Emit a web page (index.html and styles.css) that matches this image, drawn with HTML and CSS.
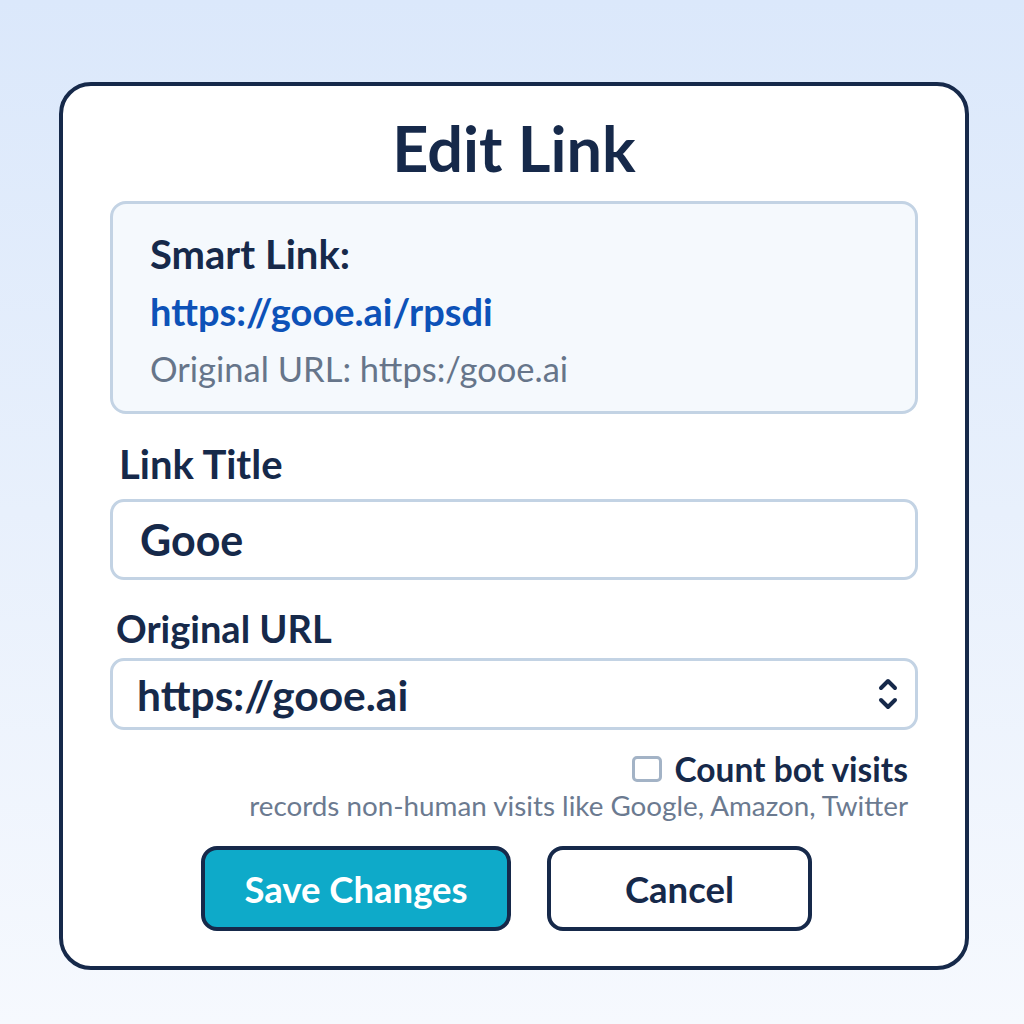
FILE: index.html
```html
<!DOCTYPE html>
<html lang="en">
<head>
<meta charset="utf-8">
<title>Edit Link</title>
<link rel="stylesheet" href="styles.css">
</head>
<body>
<div class="page">
  <div class="card">
    <h1 class="title">Edit Link</h1>
    <div class="smart">
      <div class="smart-label">Smart Link:</div>
      <div class="smart-url">https://gooe.ai/rpsdi</div>
      <div class="smart-orig">Original URL: https:/gooe.ai</div>
    </div>
    <div class="field-label first">Link Title</div>
    <div class="input">Gooe</div>
    <div class="field-label second">Original URL</div>
    <div class="select">
      <span class="select-value">https://gooe.ai</span>
      <svg class="chev" width="22" height="40" viewBox="0 0 22 40" fill="none" stroke="#16294a" stroke-width="4" stroke-linecap="round" stroke-linejoin="round">
        <path d="M4 14 L11 7 L18 14"/>
        <path d="M4 26 L11 33 L18 26"/>
      </svg>
    </div>
    <div class="check-row">
      <span class="checkbox"></span>
      <span class="check-label">Count bot visits</span>
    </div>
    <div class="helper">records non-human visits like Google, Amazon, Twitter</div>
    <div class="buttons">
      <button class="btn save">Save Changes</button>
      <button class="btn cancel">Cancel</button>
    </div>
  </div>
</div>
</body>
</html>
```
FILE: styles.css
```css
html, body {
  margin: 0;
  padding: 0;
}
body {
  width: 1024px;
  height: 1024px;
  background: linear-gradient(180deg, #dbe8fb 0%, #e8f0fc 50%, #f6f9fe 100%);
  font-family: Lato, "Open Sans", sans-serif;
  color: #16294a;
}
.page {
  padding-top: 82px;
  padding-left: 59px;
}
.card {
  box-sizing: border-box;
  width: 910px;
  height: 888px;
  background: #ffffff;
  border: 4px solid #16294a;
  border-radius: 32px;
  padding: 32px 47px 0 47px;
  display: flex;
  flex-direction: column;
}
.title {
  margin: 0;
  text-align: center;
  font-size: 63px;
  line-height: 60px;
  font-weight: 700;
  color: #16294a;
}
.smart {
  margin-top: 23px;
  height: 213px;
  box-sizing: border-box;
  border: 3px solid #c3d3e4;
  border-radius: 16px;
  background: #f5f9fd;
  padding: 22px 37px 0 37px;
}
.smart-label, .smart-url, .smart-orig {
  line-height: 57px;
  white-space: nowrap;
}
.smart-label {
  font-size: 40px;
  font-weight: 700;
  color: #16294a;
}
.smart-url {
  font-size: 38px;
  font-weight: 700;
  color: #0d52b8;
}
.smart-orig {
  font-size: 34.5px;
  color: #66758a;
}
.field-label {
  font-size: 40px;
  line-height: 40px;
  font-weight: 700;
  color: #16294a;
  padding-left: 9px;
}
.field-label.first { margin-top: 30px; }
.field-label.second { margin-top: 28px; padding-left: 6px; font-size: 38px; }
.input {
  margin-top: 15px;
  height: 81px;
  box-sizing: border-box;
  border: 3px solid #c3d3e4;
  border-radius: 14px;
  padding-left: 27px;
  display: flex;
  align-items: center;
  font-size: 43px;
  font-weight: 700;
  color: #16294a;
}
.select {
  margin-top: 10px;
  height: 72px;
  box-sizing: border-box;
  border: 3px solid #c3d3e4;
  border-radius: 14px;
  padding: 0 16px 0 24px;
  display: flex;
  align-items: center;
  justify-content: space-between;
  font-size: 42.5px;
  font-weight: 700;
  color: #16294a;
}
.check-row {
  margin-top: 22px;
  height: 34px;
  display: flex;
  align-items: center;
  justify-content: flex-end;
  padding-right: 10px;
  gap: 12px;
}
.checkbox {
  width: 24px;
  height: 20px;
  border: 3px solid #a3b3c6;
  border-radius: 5px;
  background: #fff;
}
.check-label {
  font-size: 33.5px;
  font-weight: 700;
  color: #16294a;
}
.helper {
  margin-top: 4px;
  line-height: 32px;
  text-align: right;
  padding-right: 10px;
  font-size: 27.8px;
  color: #6b7a90;
  white-space: nowrap;
}
.buttons {
  margin-top: 24px;
  display: flex;
  gap: 36px;
  padding-left: 91px;
}
.btn {
  height: 85px;
  box-sizing: border-box;
  border: 4px solid #16294a;
  border-radius: 16px;
  font-family: Lato, "Open Sans", sans-serif;
  font-size: 36.5px;
  font-weight: 700;
  cursor: pointer;
}
.save {
  width: 310px;
  background: #0eaac9;
  color: #ffffff;
}
.cancel {
  width: 265px;
  background: #ffffff;
  color: #16294a;
}
```
